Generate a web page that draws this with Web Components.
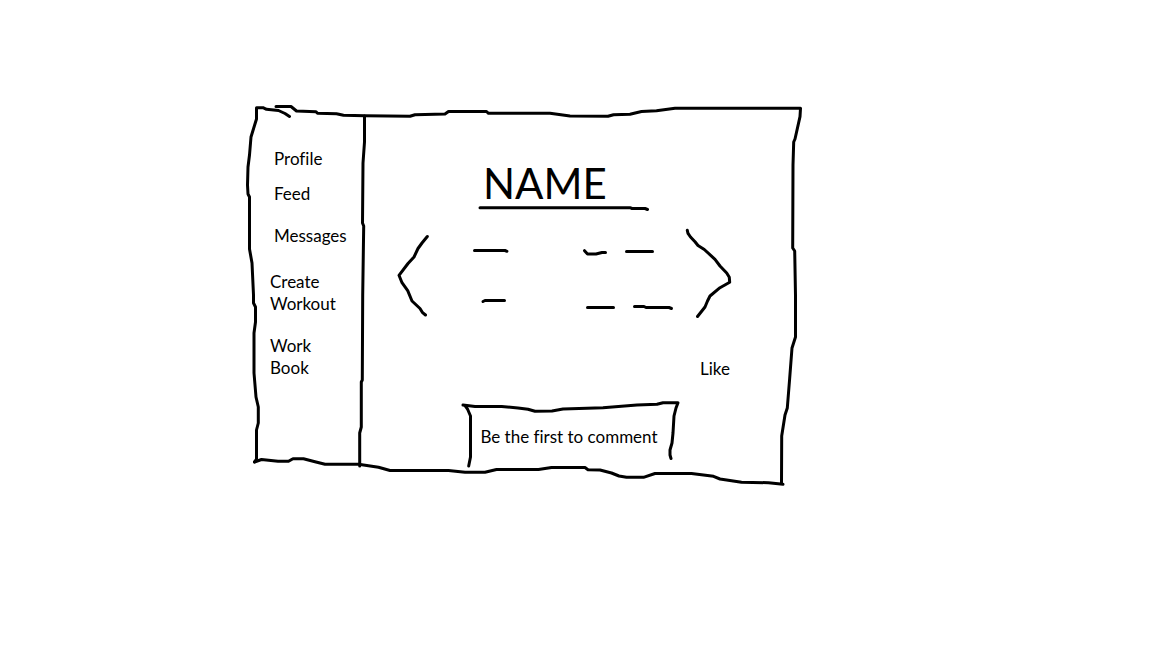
<!DOCTYPE html>
<html lang="en">
<head>
<meta charset="utf-8">
<title>Workout profile wireframe</title>
<style>
  body { margin: 0; background: #fff; color: #000; font: 17px/22px Lato, "Open Sans", sans-serif; font-variant-ligatures: none; }
</style>
</head>
<body>
<wire-page>
  <wire-board>
    <wire-nav slot="nav"></wire-nav>
    <wire-profile>
      <span slot="name">NAME</span>
      <wire-carousel></wire-carousel>
      <span slot="like">Like</span>
      <wire-comment slot="comment">Be the first to comment</wire-comment>
    </wire-profile>
  </wire-board>
</wire-page>
<script>
const base = `
  * { box-sizing: border-box; }
  svg { display: block; width: 100%; height: 100%; overflow: visible; fill: none; stroke: #000;
        stroke-width: 3; stroke-linecap: round; stroke-linejoin: round; }
  path { vector-effect: non-scaling-stroke; }
  button { font: inherit; font-variant-ligatures: none; color: inherit; background: none; border: 0; padding: 0; cursor: pointer; }
`;
const sketch = (box, ...paths) =>
  `<svg viewBox="${box}" preserveAspectRatio="none" aria-hidden="true">${paths.map(d => `<path d="${d}"/>`).join('')}</svg>`;

function define(name, css, html) {
  customElements.define(name, class extends HTMLElement {
    constructor() {
      super();
      this.attachShadow({ mode: 'open' }).innerHTML = `<style>${base}${css}</style>${html}`;
    }
  });
}

define('wire-page', `
  :host { display: grid; grid-template-columns: 248fr 552fr 352fr; padding: 106px 0; }
  main { grid-column: 2; min-width: 0; }
`, `<main><slot></slot></main>`);

define('wire-board', `
  :host { display: grid; grid-template-columns: 116fr 436fr; position: relative; }
  .frame { position: absolute; inset: 0; pointer-events: none; }
`, `<div class="frame">${sketch('248 106 552 380',
  'M289.5 116.5L285 113.5L278.5 110.5L266.5 109.3L263 107.7L256.5 107.7V119L251 137L249.5 155L248 167L247.5 185L248 194L249.5 197V249L252 263L253.5 295V303L255.5 307V322L254 333V373L256 397L258.3 407V423L256.5 430V459L254.5 462',
  'M276 106.5H291L296.5 111L316 111.7L317.5 113.3L336.5 113.7L343.5 115.3L365 115.7L410 116.3L415 114.7L445 114L448.5 111.5H486.5L488.5 113.3H550L570 116L608 116.3L613.5 114.7L630 114.3L641.5 111.5L656.5 110.7L675 108.3H800.5L800 116.7L795 139L793.7 142L793 165L792.7 248L794.7 251L795.5 295V337L792 348L789.7 378L787.3 408L785 415L781.7 436L781.5 483',
  'M254.5 462L261.5 459.5L278 461.3H288.5L293 458.7H303.5L315 461.7L325 464.3H358.5L378.5 467.3L390 470.5H448.5L465 472.3H485L496.5 469.5H538.5L551.5 467.5H585L588 469.7L600 470L611.5 473L619 476L626.5 477.3H643.5L655 473.5H691.5L713.5 476.3L720 479L741.5 482.3L768.5 482.7L783 484.3',
  'M364.5 116V142L363 163L362.5 223L363.7 226L362.7 295L362.3 380L361.3 382V427L359.7 433V466')}</div>
  <slot name="nav"></slot><slot></slot>`);

define('wire-nav', `
  :host { display: block; padding: 42px 0 0 22px; }
  ul { list-style: none; margin: 0; padding: 0; }
  li { margin-bottom: 20px; padding-left: 4px; }
  .tight { margin-bottom: 13px; }
  .loose { margin-bottom: 24px; }
  .double { padding-left: 0; }
  a { color: inherit; text-decoration: none; }
`, `<nav aria-label="Main"><ul>
  <li class="tight"><a href="#profile">Profile</a></li>
  <li><a href="#feed">Feed</a></li>
  <li class="loose"><a href="#messages">Messages</a></li>
  <li class="double"><a href="#create">Create<br>Workout</a></li>
  <li class="double"><a href="#book">Work<br>Book</a></li>
</ul></nav>`);

define('wire-profile', `
  :host { display: flex; flex-direction: column; min-width: 0; padding: 56px 68px 18px 32px; }
  header { align-self: center; width: 170px; }
  h1 { margin: 0; padding-left: 4px; font-size: 42px; line-height: 42px; font-weight: 400; }
  .rule { height: 8px; }
  .slides { margin-top: 16px; }
  .like { align-self: flex-end; margin-top: 38px; padding-right: 2px; }
  .comment { align-self: center; margin-top: 22px; padding-left: 12px; }
`, `<header><h1><slot name="name"></slot></h1><div class="rule">${
  sketch('479 204 170 8', 'M480 207.7H630L632 208.5H645L647.5 209.5')}</div></header>
  <div class="slides"><slot></slot></div>
  <button class="like" type="button"><slot name="like"></slot></button>
  <div class="comment"><slot name="comment"></slot></div>`);

define('wire-carousel', `
  :host { display: grid; grid-template-columns: 36px 1fr 48px; height: 92px; }
`, `<button type="button" aria-label="Previous">${sketch('396 228 36 92',
  'M427.3 236.5L422 243L418 248.5L414 257L408 263.5L399 275.3L402 282.7L407.7 290.7L412 301L420 308.5L422.3 312.3L425.5 315')}</button>
  <div>${sketch('432 228 252 92',
  'M474.5 250.5H505L507 251.3', 'M483 301.5L485 300.5H504.5',
  'M584.5 250.7L587.5 254H596L602 252.5H605.5', 'M626.5 251.5H652.5',
  'M587.5 307.5H613.5', 'M634.5 306.5H644L646 307.5H669L671.5 308.5')}</div>
  <button type="button" aria-label="Next">${sketch('684 228 48 92',
  'M687.3 230.3L688 233.3L690.5 237L695 241.7L698 245.5L704.3 249.5L715 259.3L720 266L726.7 273L729.3 277.3L729.7 282.3L720 287.7L710 296L707.5 301L705 307L697.5 316.5')}</button>`);

define('wire-comment', `
  :host { display: block; }
  button { position: relative; display: block; width: 216px; height: 66px; padding: 4px 2px 0 0; }
  .edge { position: absolute; inset: 0; }
`, `<button type="button"><span class="edge">${sketch('462 402 216 66',
  'M463 405L475 406.5H501.7L518 408L528 409.3L535 411.3L552 411L563 409L603 407.7L637 405L657 404.3L663 402.7H678L676 408L674 416L673 433L672 443L670 450V455L671 458.5',
  'M465 405.7L467.5 409L470.5 416V457L468.7 466')}</span><slot></slot></button>`);
</script>
</body>
</html>
